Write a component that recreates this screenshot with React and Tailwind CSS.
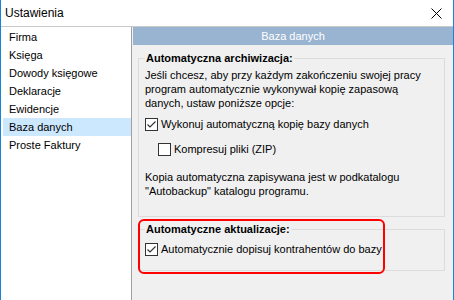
const items = ["Firma", "Księga", "Dowody księgowe", "Deklaracje", "Ewidencje", "Baza danych", "Proste Faktury"];

const Checkbox = ({ checked }) => (
    <span className="w-[13px] h-[13px] shrink-0 border border-[#333333] bg-white flex items-center justify-center">
        {checked && (
            <svg width="11" height="11" viewBox="0 0 11 11">
                <path d="M1.5 5.5 L4 8 L9.5 2.5" fill="none" stroke="#333333" strokeWidth="1.2" />
            </svg>
        )}
    </span>
);

const App = () => {
    return (
        <div className="w-[454px] h-[300px] overflow-hidden bg-white border-x border-[#1883d7] flex flex-col font-['Liberation_Sans',Arial,sans-serif] text-[11px] text-black">

            {/* Title bar */}
            <div className="h-[26px] shrink-0 flex items-center justify-between pl-[4px] pr-[11px]">
                <span className="text-[12px]">Ustawienia</span>
                <svg width="11" height="11" viewBox="0 0 11 11">
                    <path d="M0.5 0.5 L10.5 10.5 M10.5 0.5 L0.5 10.5" stroke="#000" strokeWidth="1" />
                </svg>
            </div>

            <div className="flex flex-1 border-t border-[#c8c8c8]">

                {/* Category list */}
                <div className="w-[131px] shrink-0 bg-white border-r border-[#a0a0a0] pt-[1px] pl-[2px]">
                    {items.map((item) => (
                        <div
                            key={item}
                            className={`h-[18px] flex items-center pl-[6px] ${item === "Baza danych" ? "bg-[#cce8ff]" : ""}`}
                        >
                            {item}
                        </div>
                    ))}
                </div>

                {/* Settings panel */}
                <div className="flex-1 bg-[#f0f0f0] pl-[1px] flex flex-col">
                    <div className="h-[18px] bg-[#99b4d1] text-white flex items-center justify-center">
                        Baza danych
                    </div>

                    <fieldset className="mt-[7px] ml-[5px] mr-[8px] border border-[#dcdcdc] px-[6px] pb-[18px]">
                        <legend className="px-[1px] font-bold leading-[13px]">Automatyczna archiwizacja:</legend>
                        <p className="mt-[3px] leading-[14px]">
                            Jeśli chcesz, aby przy każdym zakończeniu swojej pracy<br />
                            program automatycznie wykonywał kopię zapasową<br />
                            danych, ustaw poniższe opcje:
                        </p>
                        <div className="mt-[7px] h-[15px] flex items-center gap-[3px]">
                            <Checkbox checked />
                            <span>Wykonuj automatyczną kopię bazy danych</span>
                        </div>
                        <div className="mt-[10px] ml-[13px] h-[15px] flex items-center gap-[3px]">
                            <Checkbox />
                            <span>Kompresuj pliki (ZIP)</span>
                        </div>
                        <p className="mt-[13px] leading-[14px]">
                            Kopia automatyczna zapisywana jest w podkatalogu<br />
                            "Autobackup" katalogu programu.
                        </p>
                    </fieldset>

                    <div className="relative mt-[6px] ml-[5px] mr-[8px]">
                        <fieldset className="border border-[#dcdcdc] px-[6px] pb-[13px]">
                            <legend className="px-[1px] font-bold leading-[13px]">Automatyczne aktualizacje:</legend>
                            <div className="mt-[6px] h-[15px] flex items-center gap-[3px]">
                                <Checkbox checked />
                                <span>Automatycznie dopisuj kontrahentów do bazy</span>
                            </div>
                        </fieldset>
                        {/* Highlight */}
                        <div className="absolute left-0 top-[-4px] w-[247px] h-[55px] border-2 border-[#ff0000] rounded-[6px]"></div>
                    </div>
                </div>
            </div>
        </div>
    );
};

export default App;
